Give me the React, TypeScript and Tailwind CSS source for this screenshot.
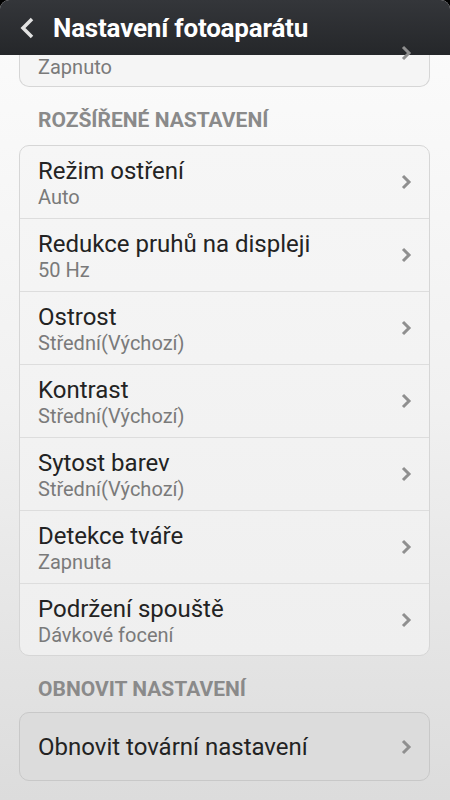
import { ReactNode } from "react";

interface Row {
  title: string;
  value?: string;
}

const advanced: Row[] = [
  { title: "Režim ostření", value: "Auto" },
  { title: "Redukce pruhů na displeji", value: "50 Hz" },
  { title: "Ostrost", value: "Střední(Výchozí)" },
  { title: "Kontrast", value: "Střední(Výchozí)" },
  { title: "Sytost barev", value: "Střední(Výchozí)" },
  { title: "Detekce tváře", value: "Zapnuta" },
  { title: "Podržení spouště", value: "Dávkové focení" },
];

function Chevron() {
  return (
    <svg width="12" height="16" viewBox="0 0 12 16" className="shrink-0">
      <polyline points="3,2 9,8 3,14" fill="none" stroke="#8f8f8f" strokeWidth="3" strokeLinejoin="miter" />
    </svg>
  );
}

function Section({ children, h }: { children: ReactNode; h: string }) {
  return (
    <div className={`${h} pl-[38px] pt-[21px] text-[21px] leading-[24px] font-bold text-[#8a8a8a]`}>
      {children}
    </div>
  );
}

function SettingRow({ row, last }: { row: Row; last: boolean }) {
  return (
    <div className={`flex items-center pl-[18px] pr-[17px] ${last ? "h-[71px]" : "h-[73px] border-b border-[#dddddd]"}`}>
      <div className="flex-1 self-start pt-[11px]">
        <div className="text-[24px] leading-[28px] text-[#232323]">{row.title}</div>
        <div className="text-[20px] leading-[24px] text-[#7a7a7a]">{row.value}</div>
      </div>
      <Chevron />
    </div>
  );
}

export default function App() {
  return (
    <div className="h-[800px] w-[450px] overflow-hidden bg-black font-['Roboto',sans-serif]">
      <div className="flex h-full flex-col overflow-hidden rounded-t-[9px] bg-gradient-to-b from-[#fcfcfc] via-[#f1f1f1] to-[#dcdcdc]">
        <div className="flex h-[55px] shrink-0 items-center bg-gradient-to-b from-[#34363a] to-[#25272a] pl-[18px]">
          <svg width="18" height="24" viewBox="0 0 18 24">
            <polyline points="14,3 5,12 14,21" fill="none" stroke="#e2e2e2" strokeWidth="3.5" />
          </svg>
          <span className="ml-[17px] text-[26px] leading-[30px] font-bold tracking-[-0.2px] text-white">Nastavení fotoaparátu</span>
        </div>

        <div className="ml-[19px] mr-[20px] flex h-[32px] shrink-0 items-start justify-between rounded-b-[10px] border border-t-0 border-[#d6d6d6] bg-[#f5f5f5] pl-[18px] pr-[17px]">
          <span className="text-[20px] leading-[24px] text-[#7a7a7a]">Zapnuto</span>
          <div className="-mt-[10px]">
            <Chevron />
          </div>
        </div>

        <Section h="h-[58px]">ROZŠÍŘENÉ NASTAVENÍ</Section>

        <div className="ml-[19px] mr-[20px] shrink-0 overflow-hidden rounded-[10px] border border-[#d6d6d6] bg-gradient-to-b from-[#f6f6f6] to-[#efefef]">
          {advanced.map((row, i) => (
            <SettingRow key={row.title} row={row} last={i === advanced.length - 1} />
          ))}
        </div>

        <Section h="h-[56px]">OBNOVIT NASTAVENÍ</Section>

        <div className="ml-[19px] mr-[20px] flex h-[69px] shrink-0 items-center rounded-[10px] border border-[#c8c8c8] bg-[#dcdcdc] pl-[18px] pr-[17px]">
          <span className="flex-1 text-[24px] leading-[28px] text-[#232323]">Obnovit tovární nastavení</span>
          <Chevron />
        </div>
      </div>
    </div>
  );
}
